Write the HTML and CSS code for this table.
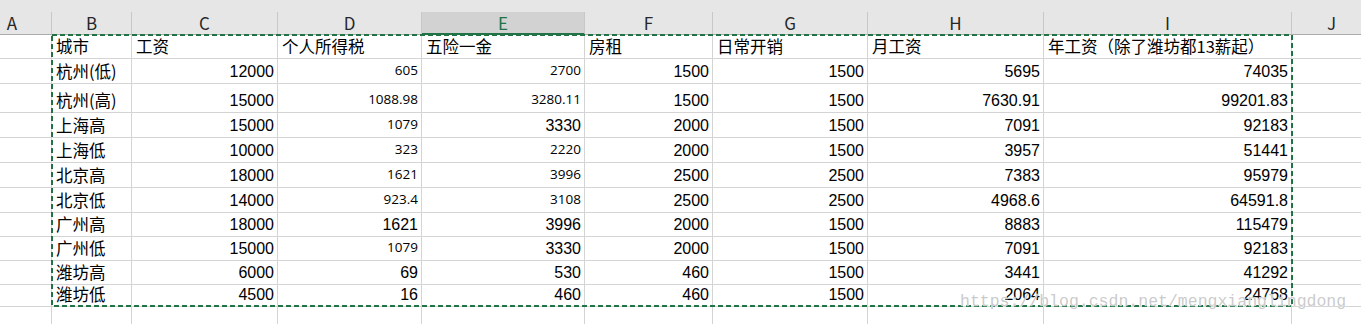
FILE: index.html
```html
<!DOCTYPE html>
<html lang="zh-CN">
<head>
<meta charset="utf-8">
<title>Sheet</title>
<link rel="stylesheet" href="styles.css">
</head>
<body>
<div class="sheet">
  <div class="strip"></div>
  <div class="grid">
    <div class="c h">A</div><div class="c h">B</div><div class="c h">C</div><div class="c h">D</div><div class="c h sel">E</div><div class="c h">F</div><div class="c h">G</div><div class="c h">H</div><div class="c h">I</div><div class="c h">J</div>

    <div class="c"></div><div class="c t">城市</div><div class="c t">工资</div><div class="c t">个人所得税</div><div class="c t">五险一金</div><div class="c t">房租</div><div class="c t">日常开销</div><div class="c t">月工资</div><div class="c t">年工资（除了潍坊都13薪起）</div><div class="c"></div>

    <div class="c"></div><div class="c t">杭州(低)</div><div class="c n">12000</div><div class="c n s">605</div><div class="c n s">2700</div><div class="c n">1500</div><div class="c n">1500</div><div class="c n">5695</div><div class="c n">74035</div><div class="c"></div>

    <div class="c"></div><div class="c t">杭州(高)</div><div class="c n">15000</div><div class="c n s">1088.98</div><div class="c n s">3280.11</div><div class="c n">1500</div><div class="c n">1500</div><div class="c n">7630.91</div><div class="c n">99201.83</div><div class="c"></div>

    <div class="c"></div><div class="c t">上海高</div><div class="c n">15000</div><div class="c n s">1079</div><div class="c n">3330</div><div class="c n">2000</div><div class="c n">1500</div><div class="c n">7091</div><div class="c n">92183</div><div class="c"></div>

    <div class="c"></div><div class="c t">上海低</div><div class="c n">10000</div><div class="c n s">323</div><div class="c n s">2220</div><div class="c n">2000</div><div class="c n">1500</div><div class="c n">3957</div><div class="c n">51441</div><div class="c"></div>

    <div class="c"></div><div class="c t">北京高</div><div class="c n">18000</div><div class="c n s">1621</div><div class="c n s">3996</div><div class="c n">2500</div><div class="c n">2500</div><div class="c n">7383</div><div class="c n">95979</div><div class="c"></div>

    <div class="c"></div><div class="c t">北京低</div><div class="c n">14000</div><div class="c n s">923.4</div><div class="c n s">3108</div><div class="c n">2500</div><div class="c n">2500</div><div class="c n">4968.6</div><div class="c n">64591.8</div><div class="c"></div>

    <div class="c"></div><div class="c t">广州高</div><div class="c n">18000</div><div class="c n">1621</div><div class="c n">3996</div><div class="c n">2000</div><div class="c n">1500</div><div class="c n">8883</div><div class="c n">115479</div><div class="c"></div>

    <div class="c"></div><div class="c t">广州低</div><div class="c n">15000</div><div class="c n s">1079</div><div class="c n">3330</div><div class="c n">2000</div><div class="c n">1500</div><div class="c n">7091</div><div class="c n">92183</div><div class="c"></div>

    <div class="c"></div><div class="c t">潍坊高</div><div class="c n">6000</div><div class="c n">69</div><div class="c n">530</div><div class="c n">460</div><div class="c n">1500</div><div class="c n">3441</div><div class="c n">41292</div><div class="c"></div>

    <div class="c"></div><div class="c t">潍坊低</div><div class="c n">4500</div><div class="c n">16</div><div class="c n">460</div><div class="c n">460</div><div class="c n">1500</div><div class="c n">2064</div><div class="c n">24768</div><div class="c"></div>

    <div class="c"></div><div class="c"></div><div class="c"></div><div class="c"></div><div class="c"></div><div class="c"></div><div class="c"></div><div class="c"></div><div class="c"></div><div class="c"></div>
  </div>
  <svg class="marquee" width="1242" height="273" viewBox="0 0 1242 273">
    <rect x="1" y="1" width="1240" height="271" fill="none" stroke="#217346" stroke-width="2" stroke-dasharray="5 3"/>
  </svg>
  <div class="watermark">https://blog.csdn.net/mengxianglingdong</div>
</div>
</body>
</html>
```

FILE: styles.css
```css
html, body {
  margin: 0;
  padding: 0;
  background: #ffffff;
}

.sheet {
  position: relative;
  width: 1361px;
  height: 324px;
  overflow: hidden;
  background: #ffffff;
}

.strip {
  height: 12px;
  background: #e6e6e6;
}

.grid {
  display: grid;
  grid-template-columns: 79px 80px 146px 144px 163px 128px 155px 176px 248px 80px;
  grid-template-rows: 23px 24px 25px 29px 25px 25px 25px 25px 24px 24px 24px 22px 40px;
  margin-left: -27px;
  width: 1399px;
}

.c {
  box-sizing: border-box;
  border-right: 1px solid #d4d4d4;
  border-bottom: 1px solid #d4d4d4;
  display: flex;
  align-items: flex-end;
  padding: 0 3px 0 4px;
  white-space: nowrap;
  color: #000000;
  font-family: "Noto Sans CJK SC", sans-serif;
  font-size: 16.5px;
  line-height: 20px;
}

.h {
  background: #e6e6e6;
  border-right-color: #c8c8c8;
  border-bottom-color: #ababab;
  justify-content: center;
  align-items: center;
  padding: 0;
  font-family: "Noto Sans CJK SC", sans-serif;
  font-size: 17px;
  line-height: 20px;
  color: #262626;
}

.h.sel {
  background: #d2d2d2;
  border-bottom: 2px solid #217346;
  color: #217346;
}

.t {
  padding-bottom: 2px;
}

.n {
  justify-content: flex-end;
  font-family: "Liberation Sans", Arial, sans-serif;
  font-size: 16px;
  padding-bottom: 1px;
}

.s {
  font-family: "Open Sans", sans-serif;
  font-size: 13.5px;
  padding-bottom: 3px;
}

.marquee {
  position: absolute;
  left: 51px;
  top: 34px;
  display: block;
}

.watermark {
  position: absolute;
  left: 960px;
  top: 294px;
  font-family: "Liberation Mono", monospace;
  font-size: 16.5px;
  line-height: 16.5px;
  color: rgba(185, 185, 185, 0.75);
  text-shadow: 0 0 1px #ffffff, 0 0 1px #ffffff;
  white-space: nowrap;
}
```
